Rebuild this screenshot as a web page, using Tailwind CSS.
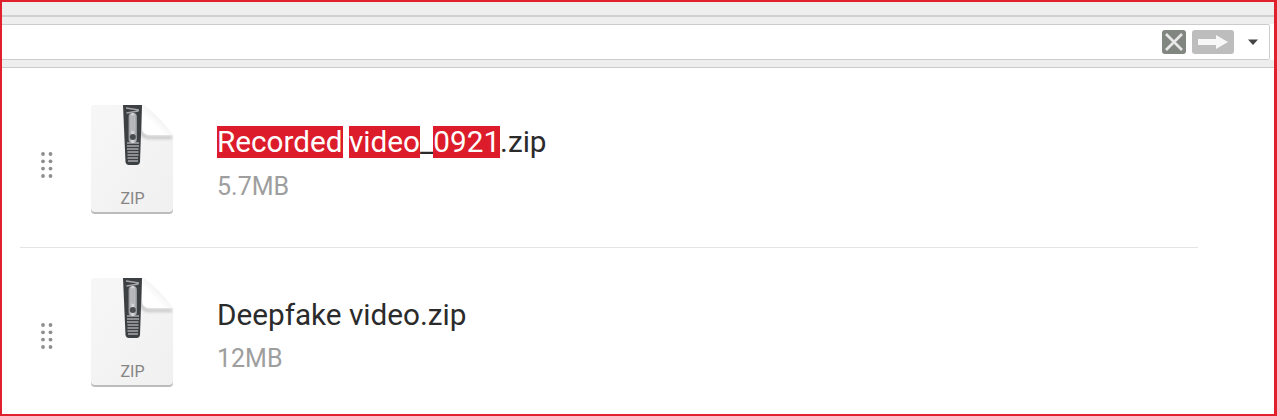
<!DOCTYPE html>
<html lang="en">
<head>
  <meta charset="UTF-8" />
  <title>Search results</title>
  <script src="https://cdn.jsdelivr.net/npm/@tailwindcss/browser@4"></script>
</head>
<body class="bg-white overflow-hidden">
  <svg width="0" height="0" class="absolute">
    <defs>
      <linearGradient id="page" x1="0" y1="0" x2="1" y2="1">
        <stop offset="0" stop-color="#f7f7f7"/>
        <stop offset="1" stop-color="#f0f0f0"/>
      </linearGradient>
      <linearGradient id="fold" x1="0" y1="1" x2="1" y2="0">
        <stop offset="0.35" stop-color="#ffffff"/>
        <stop offset="0.75" stop-color="#e9e9e9"/>
      </linearGradient>
      <linearGradient id="slider" x1="0" y1="0" x2="1" y2="0">
        <stop offset="0" stop-color="#8e9194"/>
        <stop offset="0.5" stop-color="#dfe1e2"/>
        <stop offset="1" stop-color="#8a8d90"/>
      </linearGradient>
      <filter id="soft" x="-30%" y="-30%" width="160%" height="160%"><feGaussianBlur stdDeviation="1.500"/></filter>
      <filter id="soft2" x="-10%" y="-10%" width="120%" height="120%"><feGaussianBlur stdDeviation="0.400"/></filter>
      <symbol id="zip" viewBox="0 0 84 110">
        <path d="M3 2H54L83 32V105Q83 109 79 109H5Q1 109 1 105V3Q1 2 3 2Z" fill="#bcbcbc" filter="url(#soft2)"/>
        <path d="M4 0H54L83 30V103Q83 107 79 107H5Q1 107 1 103V3Q1 0 4 0Z" fill="url(#page)"/>
        <path d="M52 2V22Q52 31 60 31H82V34H58Q49 33 49 24V2Z" fill="#c4c4c4" filter="url(#soft)"/>
        <path d="M54 0Q70 12 83 30H60Q52 30 52 22V0Z" fill="url(#fold)"/>
        <g filter="url(#soft2)">
          <path d="M33 0H52L50 57Q49.500 60 46.500 60H39Q36 60 35.500 57Z" fill="#3c3f42"/>
          <path d="M36 3L49 5M36.500 8L48.500 6M37 38H49M37 41H49M37 44H48.500M37.500 47H48.500M37.500 50H48.500M37.500 53H48M38 56H48" stroke="#a6a9ac" stroke-width="1.400"/>
          <rect x="38.500" y="8" width="8.500" height="30" rx="4" fill="url(#slider)"/>
          <rect x="41.300" y="10" width="3" height="16" rx="1.500" fill="#b3b6b8"/>
          <circle cx="42.800" cy="32" r="3" fill="#4a4d50"/>
        </g>
        <text x="42.500" y="99" text-anchor="middle" font-family="Roboto, sans-serif" font-size="16" fill="#858585">ZIP</text>
      </symbol>
      <symbol id="grip" viewBox="0 0 14 26">
        <g fill="#8f8f8f">
          <circle cx="3" cy="3" r="1.900"/><circle cx="10.500" cy="3" r="1.900"/>
          <circle cx="3" cy="10.300" r="1.900"/><circle cx="10.500" cy="10.300" r="1.900"/>
          <circle cx="3" cy="17.600" r="1.900"/><circle cx="10.500" cy="17.600" r="1.900"/>
          <circle cx="3" cy="25" r="1.900"/><circle cx="10.500" cy="25" r="1.900"/>
        </g>
      </symbol>
    </defs>
  </svg>

  <div class="w-[1277px] h-[416px] border-2 border-r-[3px] border-[#e0202c] overflow-hidden font-['Roboto',sans-serif]">
    <!-- toolbar strips -->
    <div class="h-[15px] bg-[#eeeeee] border-b-2 border-[#cfcfcf]"></div>
    <div class="h-[7px] bg-[#eeeeee]"></div>
    <div class="h-[36px] bg-white border-y border-r border-[#cccccc] rounded-r-[2px] mr-[4px] flex items-center justify-end">
      <div class="w-[24px] h-[24px] rounded-[3px] bg-[#828680] flex items-center justify-center">
        <svg width="22" height="22" viewBox="0 0 22 22"><path d="M3 3L19 19M19 3L3 19" stroke="#e8e8e8" stroke-width="2.600"/></svg>
      </div>
      <div class="ml-[6px] w-[42px] h-[24px] rounded-[3px] bg-[#bdbdbd] flex items-center justify-center">
        <svg width="32" height="16" viewBox="0 0 32 16"><path d="M1 5H19V1L31 8L19 15V11H1Z" fill="#f7f7f7"/></svg>
      </div>
      <svg class="ml-[13px] mr-[10px]" width="12" height="8" viewBox="0 0 12 8"><path d="M1 1.500H11L6 7Z" fill="#444444"/></svg>
    </div>
    <div class="h-[8px] bg-[#eeeeee] border-b border-[#cccccc]"></div>

    <!-- file rows -->
    <div class="h-[180px] ml-[18px] mr-[76px] pt-[37px] pl-[20px] flex items-start border-b border-[#e4e4e4]">
      <svg class="w-[14px] h-[28px] mt-[45px]"><use href="#grip"/></svg>
      <svg class="w-[84px] h-[110px] ml-[36px]"><use href="#zip"/></svg>
      <div class="ml-[43px] mt-[21px]">
        <div class="text-[29.700px] leading-[32px] text-[#2b2b2b] whitespace-nowrap"><span class="inline-block bg-[#dc1c2a] text-white -mr-[1px]">Recorded</span> <span class="inline-block bg-[#dc1c2a] text-white">video</span>_<span class="inline-block bg-[#dc1c2a] text-white">0921</span>.zip</div>
        <div class="mt-[16px] text-[25px] leading-[26px] text-[#9e9e9e]">5.7MB</div>
      </div>
    </div>
    <div class="h-[166px] ml-[18px] mr-[76px] pt-[30px] pl-[20px] flex items-start">
      <svg class="w-[14px] h-[28px] mt-[43px]"><use href="#grip"/></svg>
      <svg class="w-[84px] h-[110px] ml-[36px]"><use href="#zip"/></svg>
      <div class="ml-[43px] mt-[21px]">
        <div class="text-[29.700px] leading-[32px] text-[#2b2b2b] whitespace-nowrap">Deepfake video.zip</div>
        <div class="mt-[15px] text-[25px] leading-[26px] text-[#9e9e9e]">12MB</div>
      </div>
    </div>
  </div>
</body>
</html>
